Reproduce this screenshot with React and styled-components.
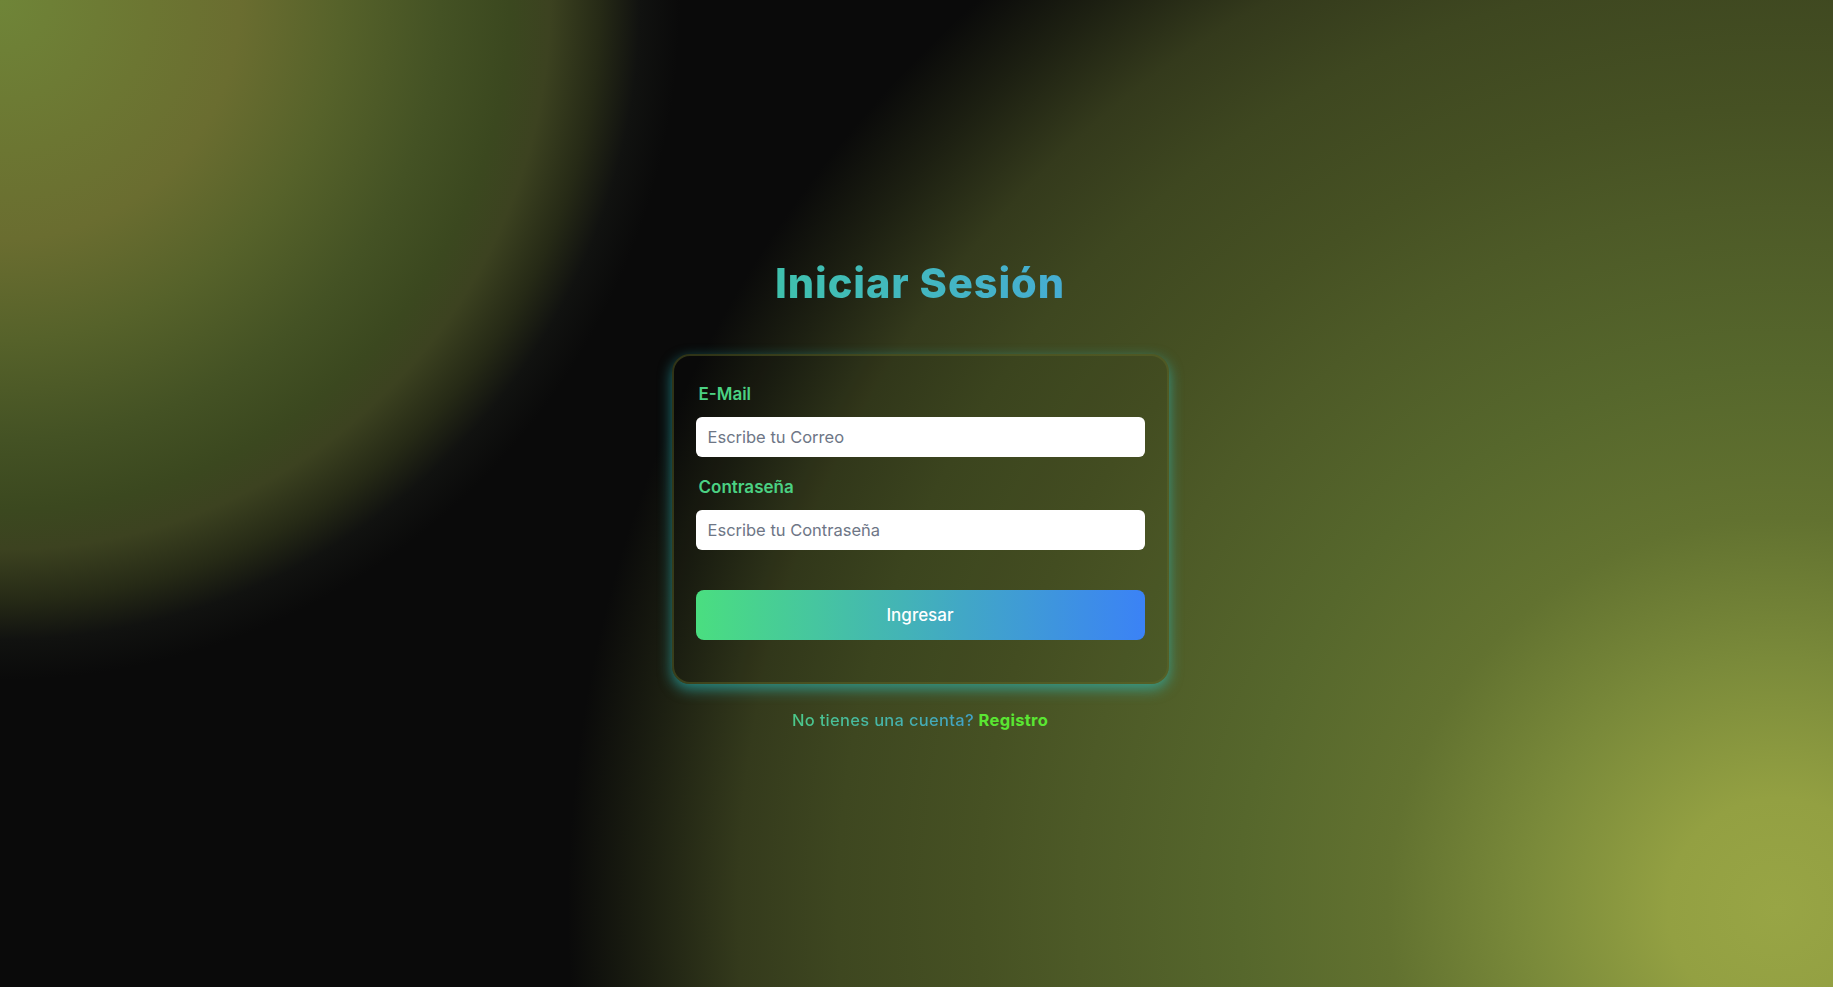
import React from "react";
import styled, { createGlobalStyle } from "styled-components";

const Global = createGlobalStyle`
  html, body { margin: 0; padding: 0; background: #0a0a0a; }
  * { box-sizing: border-box; }
  body { font-family: Inter, "Noto Sans", "Liberation Sans", sans-serif; }
`;

const Page = styled.main`
  min-height: 100vh;
  display: flex;
  flex-direction: column;
  align-items: center;
  justify-content: center;
  padding-left: 7px;
  background:
    radial-gradient(circle at 0 0,
      #6f8538 0px, #6c7632 150px, #6a6d30 240px, #56622a 340px,
      #445224 440px, #3b481f 510px, #3c4220 550px, #262a16 600px,
      #111210 640px, rgba(10,10,10,0) 680px),
    radial-gradient(circle at 97% 92%,
      #98a545 0px, #93a042 110px, #7a8a3a 250px, #627230 390px,
      #56672c 540px, #4d5a27 700px, #465123 800px, #3e4720 940px,
      #343a1c 1040px, #1d2012 1130px, rgba(10,10,10,0) 1210px),
    #0a0a0a;
`;

const Title = styled.h1`
  margin: 0 0 46px;
  font-size: 41.5px;
  font-weight: 800;
  letter-spacing: 0.9px;
  background: linear-gradient(90deg, #3fc1ad, #46add3);
  -webkit-background-clip: text;
  background-clip: text;
  color: transparent;
`;

const Card = styled.form`
  width: 497px;
  padding: 28px 22px 42px;
  border: 2px solid rgba(95, 105, 40, 0.45);
  border-radius: 18px;
  background: rgba(0, 0, 0, 0.04);
  box-shadow: 0 5px 14px rgba(40, 200, 205, 0.6);
  display: flex;
  flex-direction: column;
`;

const Field = styled.div`
  display: flex;
  flex-direction: column;
  gap: 13px;
  margin-bottom: ${(p) => p.$mb}px;
`;

const Label = styled.label`
  padding-left: 3px;
  font-size: 17px;
  font-weight: 600;
  color: #4bd183;
`;

const Input = styled.input`
  height: 40px;
  width: 100%;
  border: none;
  border-radius: 6px;
  background: #fff;
  padding: 0 12px;
  font-family: inherit;
  font-size: 16.5px;
  color: #222;
  outline: none;
  &::placeholder { color: #6e7686; }
`;

const Button = styled.button`
  height: 50px;
  width: 100%;
  border: none;
  border-radius: 8px;
  background: linear-gradient(90deg, #4ade80, #3b82f6);
  color: #fff;
  font-family: inherit;
  font-size: 17px;
  font-weight: 500;
  cursor: pointer;
`;

const Footer = styled.p`
  margin: 26px 0 0;
  font-size: 16.5px;
  font-weight: 500;
  letter-spacing: 0.3px;
`;

const Muted = styled.span`
  background: linear-gradient(90deg, #4cc98a, #41a0c8);
  -webkit-background-clip: text;
  background-clip: text;
  color: transparent;
`;

const Link = styled.a`
  color: #5ae632;
  font-weight: 700;
  text-decoration: none;
`;

export default function App() {
  return (
    <>
      <Global />
      <Page>
        <Title>Iniciar Sesión</Title>
        <Card onSubmit={(e) => e.preventDefault()}>
          <Field $mb={20}>
            <Label htmlFor="email">E-Mail</Label>
            <Input id="email" type="email" placeholder="Escribe tu Correo" />
          </Field>
          <Field $mb={40}>
            <Label htmlFor="pass">Contraseña</Label>
            <Input id="pass" type="password" placeholder="Escribe tu Contraseña" />
          </Field>
          <Button type="submit">Ingresar</Button>
        </Card>
        <Footer>
          <Muted>No tienes una cuenta? </Muted>
          <Link href="#">Registro</Link>
        </Footer>
      </Page>
    </>
  );
}
